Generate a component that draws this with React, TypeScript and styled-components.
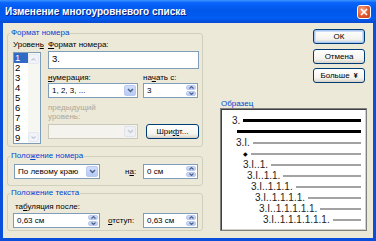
import styled, { createGlobalStyle, css } from "styled-components";

const GlobalStyle = createGlobalStyle`
  html, body {
    margin: 0;
    padding: 0;
    background: #ece9d8;
  }
  body {
    font-family: "Liberation Sans", Arial, sans-serif;
    font-size: 8px;
    color: #000;
  }
  * {
    box-sizing: border-box;
  }
`;

const Window = styled.div`
  width: 376px;
  height: 241px;
  display: flex;
  flex-direction: column;
  background: #0a4fdc;
  overflow: hidden;
`;

const TitleBar = styled.div`
  height: 23px;
  flex: none;
  display: flex;
  align-items: center;
  padding: 0 5px 0 5px;
  background: linear-gradient(
    to bottom,
    #3d95ff 0%,
    #0a63fb 12%,
    #0057ea 45%,
    #005cf2 80%,
    #0848d2 100%
  );
`;

const Title = styled.span`
  flex: 1;
  color: #fff;
  font-weight: bold;
  font-size: 10px;
  text-shadow: 1px 1px 0 #0a1d83;
`;

const CloseButton = styled.div`
  width: 14px;
  height: 14px;
  border: 1px solid #fff;
  border-radius: 3px;
  background: radial-gradient(circle at 35% 30%, #f4a585 0%, #e2582f 55%, #c3401c 100%);
  display: flex;
  align-items: center;
  justify-content: center;
`;

const Body = styled.div`
  flex: 1;
  display: flex;
  margin: 0 3px 3px;
  padding: 5px 0 0 4px;
  background: #ece9d8;
`;

const LeftColumn = styled.div`
  width: 196px;
  display: flex;
  flex-direction: column;
`;

const RightColumn = styled.div`
  width: 147px;
  margin-left: 17px;
  display: flex;
  flex-direction: column;
`;

const Group = styled.fieldset<{ $top?: number }>`
  margin: ${(p) => p.$top ?? 0}px 0 0 0;
  padding: 0 0 0 2px;
  border: 1px solid #d0d0bf;
  border-radius: 3px;
  min-width: 0;
`;

const Legend = styled.legend`
  padding: 0 1px;
  color: #0046d5;
  font-size: 8px;
  line-height: 10px;
`;

const GroupContent = styled.div<{ $pad: string }>`
  padding: ${(p) => p.$pad};
`;

const Label = styled.div<{ $disabled?: boolean; $lh?: number }>`
  line-height: ${(p) => p.$lh ?? 10}px;
  white-space: nowrap;
  color: ${(p) => (p.$disabled ? "#aca899" : "#000")};
`;

const InlineLabel = styled.span<{ $left: number }>`
  margin-left: ${(p) => p.$left}px;
  white-space: nowrap;
`;

const FormatRow = styled.div`
  display: flex;
  gap: 7px;
`;

const LevelColumn = styled.div`
  width: 28px;
  display: flex;
  flex-direction: column;
`;

const ListBox = styled.div`
  margin-top: 2px;
  height: 92px;
  border: 1px solid #7f9db9;
  background: #fff;
  display: flex;
`;

const ListItems = styled.div`
  flex: 1;
  display: flex;
  flex-direction: column;
`;

const ListItem = styled.div<{ $selected?: boolean }>`
  height: 10px;
  line-height: 10px;
  padding-left: 1px;
  font-size: 9.5px;
  ${(p) =>
    p.$selected &&
    css`
      background: #316ac5;
      color: #fff;
    `}
`;

const ScrollBar = styled.div`
  width: 12px;
  display: flex;
  flex-direction: column;
  justify-content: space-between;
  background: #f7f7f2;
  padding: 1px 1px 1px 0;
`;

const ScrollButton = styled.div`
  height: 10px;
  border: 1px solid #e4e8f2;
  border-radius: 2px;
  background: #f1f3f8;
  display: flex;
  align-items: center;
  justify-content: center;
`;

const FormatColumn = styled.div`
  flex: 1;
  display: flex;
  flex-direction: column;
`;

const EditBox = styled.div`
  margin-top: 1px;
  height: 18px;
  border: 1px solid #7f9db9;
  background: #fff;
  padding: 1px 0 0 3px;
  font-size: 9.5px;
  line-height: 11px;
`;

const FieldGrid = styled.div`
  display: grid;
  grid-template-columns: 90px 1fr;
  column-gap: 5px;
  align-items: end;
`;

const Combo = styled.div<{ $w?: number; $disabled?: boolean }>`
  width: ${(p) => (p.$w ? `${p.$w}px` : "auto")};
  height: 15px;
  border: 1px solid ${(p) => (p.$disabled ? "#cac8bb" : "#7f9db9")};
  background: ${(p) => (p.$disabled ? "#f4f3ee" : "#fff")};
  display: flex;
  padding: 1px;
`;

const ComboText = styled.span`
  flex: 1;
  padding-left: 2px;
  line-height: 11px;
  white-space: nowrap;
`;

const ComboButton = styled.div<{ $disabled?: boolean }>`
  width: 12px;
  border-radius: 2px;
  display: flex;
  align-items: center;
  justify-content: center;
  ${(p) =>
    p.$disabled
      ? css`
          background: #eef0f4;
          border: 1px solid #e0e3ea;
        `
      : css`
          background: linear-gradient(#d2defc, #b6caf6);
          border: 1px solid #b9c9ef;
        `}
`;

const Spin = styled.div<{ $w: number }>`
  width: ${(p) => p.$w}px;
  height: 15px;
  border: 1px solid #7f9db9;
  background: #fff;
  display: flex;
  padding: 1px;
`;

const SpinButtons = styled.div`
  width: 10px;
  display: flex;
  flex-direction: column;
  gap: 1px;
`;

const SpinHalf = styled.div`
  flex: 1;
  border-radius: 2px;
  background: linear-gradient(#d2defc, #b6caf6);
  border: 1px solid #b9c9ef;
  display: flex;
  align-items: center;
  justify-content: center;
`;

const Button = styled.div<{ $w: number; $default?: boolean }>`
  width: ${(p) => p.$w}px;
  height: 15px;
  border: 1px solid #003c74;
  border-radius: 3px;
  background: linear-gradient(#ffffff 0%, #f4f3ee 70%, #d8d3c7 100%);
  display: flex;
  align-items: center;
  justify-content: center;
  gap: 4px;
  font-size: 8px;
  white-space: nowrap;
  ${(p) =>
    p.$default &&
    css`
      box-shadow: inset 0 0 0 1px #a9c6f3, inset 0 0 0 2px #cddcf7;
    `}
`;

const DialogButtons = styled.div`
  display: flex;
  flex-direction: column;
  align-items: flex-end;
  padding-right: 2px;
  margin-top: 1px;
  gap: 5px;
`;

const ControlRow = styled.div`
  display: flex;
  align-items: center;
  & > :last-child {
    margin-left: auto;
  }
`;

const SampleCaption = styled.div`
  margin-top: 16px;
  padding-left: 1px;
  line-height: 9px;
  color: #0046d5;
`;

const SampleBox = styled.div`
  height: 123px;
  border: 1px solid #808080;
  box-shadow: inset 1px 1px 0 #404040, inset -1px -1px 0 #d4d0c8;
  background: #fff;
  padding: 6px 5px 0 0;
  display: flex;
  flex-direction: column;
`;

const SampleRow = styled.div<{ $indent: number }>`
  height: 11px;
  display: flex;
  align-items: center;
  gap: 3px;
  padding-left: ${(p) => p.$indent}px;
`;

const SampleNumber = styled.span`
  font-size: 10px;
  line-height: 11px;
  color: #222;
  white-space: nowrap;
`;

const Bullet = styled.span`
  font-family: "DejaVu Sans", sans-serif;
  font-size: 6px;
  color: #000;
`;

const SampleLine = styled.div<{ $strong?: boolean }>`
  flex: 1;
  height: ${(p) => (p.$strong ? 3 : 2)}px;
  background: ${(p) => (p.$strong ? "#000" : "#a3a3a3")};
`;

const Chevron = ({ color = "#4d6185" }: { color?: string }) => (
  <svg width="7" height="5" viewBox="0 0 7 5">
    <path d="M1 1 L3.5 3.5 L6 1" stroke={color} strokeWidth="1.5" fill="none" />
  </svg>
);

const SmallArrow = ({ up, color = "#4d6185" }: { up?: boolean; color?: string }) => (
  <svg width="5" height="3" viewBox="0 0 5 3">
    <path d={up ? "M0.5 2.5 L2.5 0.6 L4.5 2.5" : "M0.5 0.5 L2.5 2.4 L4.5 0.5"} stroke={color} strokeWidth="1.2" fill="none" />
  </svg>
);

interface ISampleRow {
  indent: number;
  label?: string;
  bullet?: boolean;
  strong?: boolean;
}

const sampleRows: ISampleRow[] = [
  { indent: 11, label: "3.", strong: true },
  { indent: 16, strong: true },
  { indent: 15, label: "3.I." },
  { indent: 22, bullet: true },
  { indent: 22, label: "3.I..1." },
  { indent: 26, label: "3.I..1.1." },
  { indent: 30, label: "3.I..1.1.1." },
  { indent: 34, label: "3.I..1.1.1.1." },
  { indent: 38, label: "3.I..1.1.1.1.1." },
  { indent: 42, label: "3.I..1.1.1.1.1.1." },
];

function SpinField({ w, value }: { w: number; value: string }) {
  return (
    <Spin $w={w}>
      <ComboText>{value}</ComboText>
      <SpinButtons>
        <SpinHalf>
          <SmallArrow up />
        </SpinHalf>
        <SpinHalf>
          <SmallArrow />
        </SpinHalf>
      </SpinButtons>
    </Spin>
  );
}

function App() {
  return (
    <>
      <GlobalStyle />
      <Window>
        <TitleBar>
          <Title>Изменение многоуровневого списка</Title>
          <CloseButton>
            <svg width="8" height="8" viewBox="0 0 8 8">
              <path d="M1 1 L7 7 M7 1 L1 7" stroke="#fff" strokeWidth="1.7" />
            </svg>
          </CloseButton>
        </TitleBar>
        <Body>
          <LeftColumn>
            <Group>
              <Legend>Формат номера</Legend>
              <GroupContent $pad="2px 3px 2px 3px">
                <FormatRow>
                  <LevelColumn>
                    <Label>
                      Уровен<u>ь</u>
                    </Label>
                    <ListBox>
                      <ListItems>
                        {[1, 2, 3, 4, 5, 6, 7, 8, 9].map((n) => (
                          <ListItem key={n} $selected={n === 1}>
                            {n}
                          </ListItem>
                        ))}
                      </ListItems>
                      <ScrollBar>
                        <ScrollButton>
                          <SmallArrow up color="#c3cad8" />
                        </ScrollButton>
                        <ScrollButton>
                          <SmallArrow color="#c3cad8" />
                        </ScrollButton>
                      </ScrollBar>
                    </ListBox>
                  </LevelColumn>
                  <FormatColumn>
                    <Label>
                      <u>Ф</u>ормат номера:
                    </Label>
                    <EditBox>3.</EditBox>
                    <FieldGrid style={{ marginTop: 4 }}>
                      <Label>
                        <u>н</u>умерация:
                      </Label>
                      <Label>
                        на<u>ч</u>ать с:
                      </Label>
                      <Combo>
                        <ComboText>1, 2, 3, ...</ComboText>
                        <ComboButton>
                          <Chevron />
                        </ComboButton>
                      </Combo>
                      <SpinField w={55} value="3" />
                    </FieldGrid>
                    <FieldGrid style={{ marginTop: 5 }}>
                      <div>
                        <Label $disabled $lh={9}>
                          предыдущий
                          <br />
                          уровень:
                        </Label>
                        <Combo $disabled style={{ marginTop: 3 }}>
                          <ComboText />
                          <ComboButton $disabled>
                            <Chevron color="#c5cad6" />
                          </ComboButton>
                        </Combo>
                      </div>
                      <Button $w={53} style={{ justifySelf: "end" }}>
                        <span>
                          Шри<u>ф</u>т...
                        </span>
                      </Button>
                    </FieldGrid>
                  </FormatColumn>
                </FormatRow>
              </GroupContent>
            </Group>

            <Group $top={4}>
              <Legend>
                Поло<u>ж</u>ение номера
              </Legend>
              <GroupContent $pad="3px 4px 6px 4px">
                <ControlRow>
                  <Combo $w={86}>
                    <ComboText>По левому краю</ComboText>
                    <ComboButton>
                      <Chevron />
                    </ComboButton>
                  </Combo>
                  <InlineLabel $left={25}>
                    н<u>а</u>:
                  </InlineLabel>
                  <SpinField w={55} value="0 см" />
                </ControlRow>
              </GroupContent>
            </Group>

            <Group $top={2}>
              <Legend>Положение текста</Legend>
              <GroupContent $pad="4px 4px 2px 3px">
                <Label style={{ paddingLeft: 2 }}>
                  та<u>б</u>уляция после:
                </Label>
                <ControlRow style={{ marginTop: 1 }}>
                  <SpinField w={87} value="0,63 см" />
                  <InlineLabel $left={8}>
                    <u>о</u>тступ:
                  </InlineLabel>
                  <SpinField w={55} value="0,63 см" />
                </ControlRow>
              </GroupContent>
            </Group>
          </LeftColumn>

          <RightColumn>
            <DialogButtons>
              <Button $w={52} $default>
                ОК
              </Button>
              <Button $w={52}>Отмена</Button>
              <Button $w={52} style={{ marginTop: -1 }}>
                Больше <span style={{ fontSize: 7, fontWeight: "bold" }}>¥</span>
              </Button>
            </DialogButtons>
            <SampleCaption>Образец</SampleCaption>
            <SampleBox>
              {sampleRows.map((row, i) => (
                <SampleRow key={i} $indent={row.indent}>
                  {row.label && <SampleNumber>{row.label}</SampleNumber>}
                  {row.bullet && <Bullet>◆</Bullet>}
                  <SampleLine $strong={row.strong} />
                </SampleRow>
              ))}
            </SampleBox>
          </RightColumn>
        </Body>
      </Window>
    </>
  );
}

export default App;
